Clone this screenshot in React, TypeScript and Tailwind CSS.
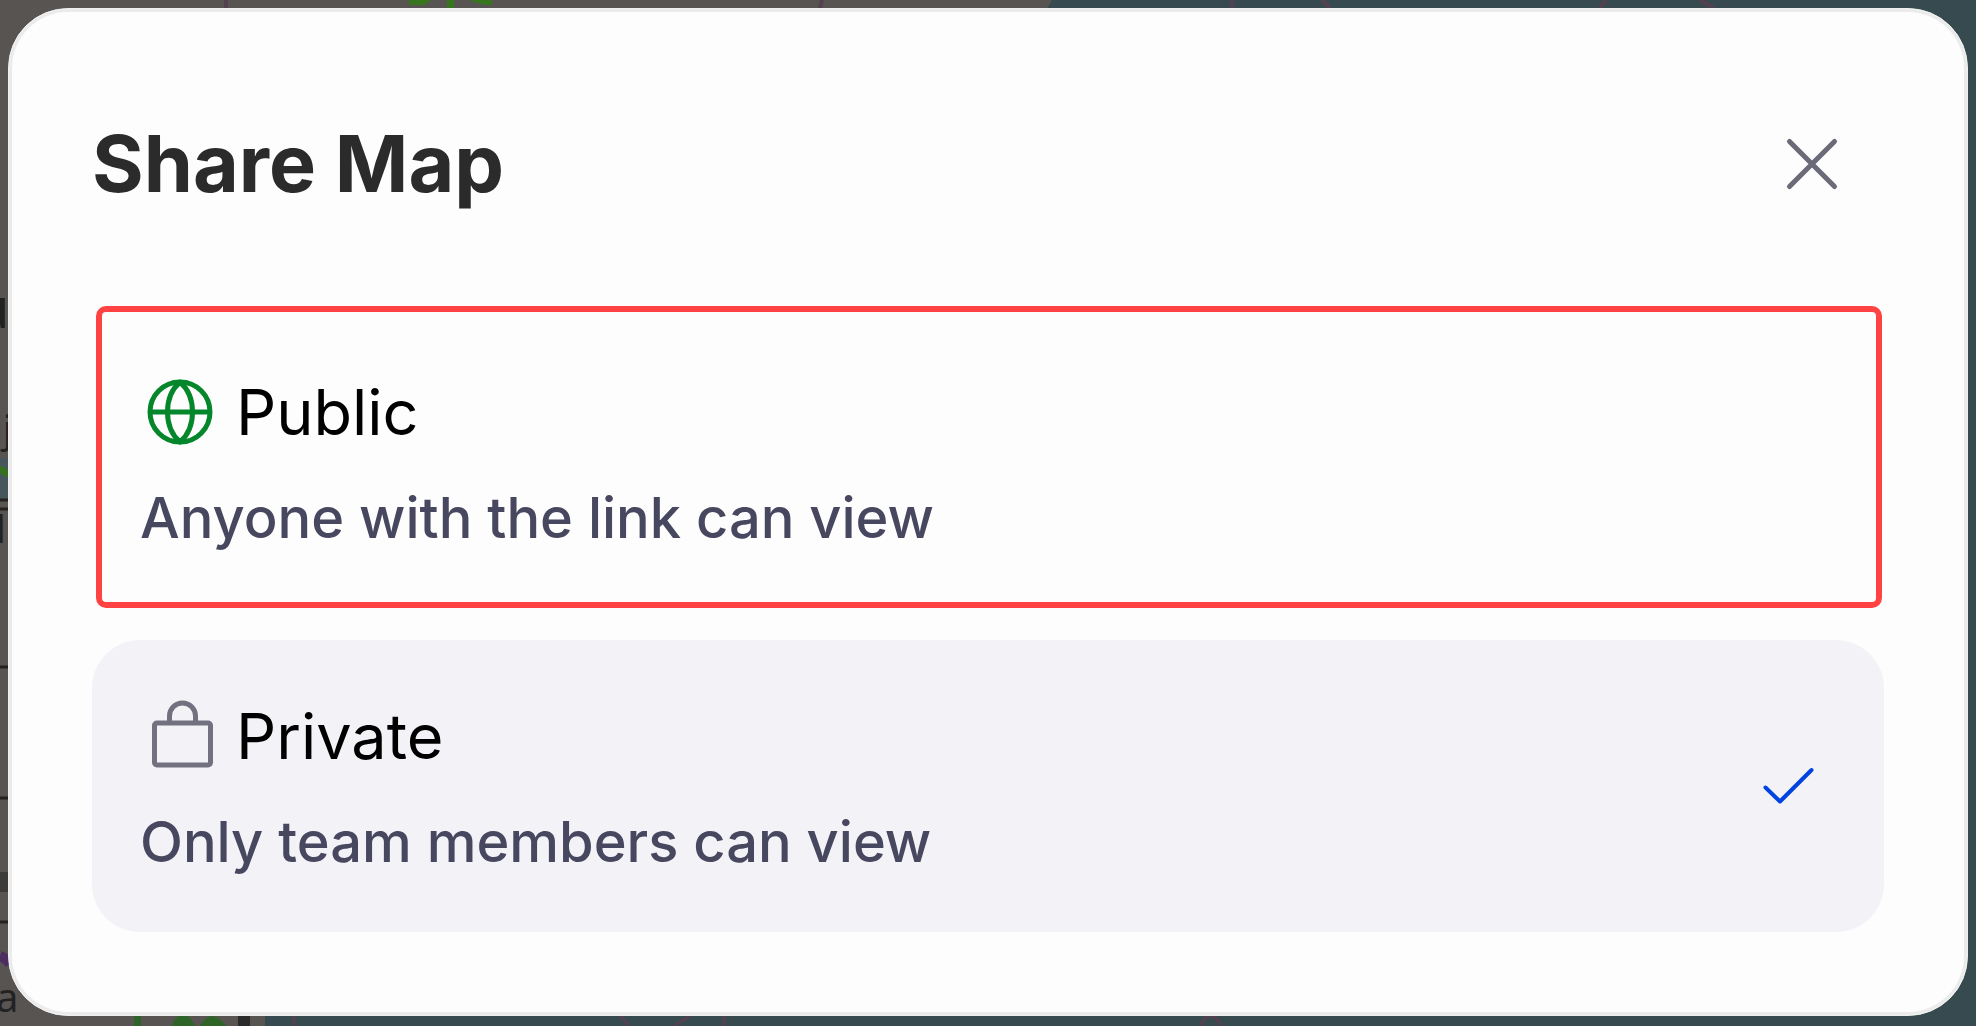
import React, { useState } from 'react';

type Access = 'public' | 'private';

function MapBackdrop() {
  return (
    <svg
      aria-hidden="true"
      className="absolute inset-0 h-full w-full"
      viewBox="0 0 1976 1026"
      preserveAspectRatio="none"
    >
      <rect width="1976" height="1026" fill="#575452" />
      <path d="M1052 0 H1976 V1026 H265 V1000 L1030 40 Z" fill="#364a50" />

      {/* parks */}
      <path d="M409 0h22l-6 5h-16z M447 0h7v8h-7z M468 0h24v5h-8z" fill="#37761f" />
      <path d="M134 1008h7v18h-7z M172 1026q4-14 16-11l8 11z M200 1026q12-20 26 0z" fill="#2f6428" />

      {/* water with a green bank */}
      <path d="M0 458h9v40H0z" fill="#46565c" />
      <path d="M0 466q5 0 9 6v6q-5-1-9-5z" fill="#37701f" />

      {/* roads and rails */}
      <path d="M0 500h9 M0 509h9 M0 667h9 M0 798h9 M0 922h9" stroke="#222222" strokeWidth="3" />
      <path d="M0 872h9v20H0z" fill="#3d3b3a" />
      <path d="M226 0v8 M822 0l-2 8 M1232 0v8 M1322 0l8 8 M1606 0l-6 8 M1700 0l14 8" stroke="#54404e" strokeWidth="4" />
      <path d="M294 1016v10 M620 1016l10 10 M690 1016l-16 10 M724 1016v10 M1200 1026q10-20 22 0" stroke="#54404e" strokeWidth="3" fill="none" />
      <path d="M238 1008h12v18h-12z" fill="#2b2b2b" />
      <path d="M0 956q6 2 10 8" stroke="#4b2d62" strokeWidth="10" fill="none" />

      <g fill="#222222" fontFamily="Noto Sans, sans-serif">
        <text x="-25" y="328" fontSize="56">u</text>
        <text x="-7" y="443" fontSize="38">ij</text>
        <text x="-4" y="543" fontSize="38">l</text>
        <text x="-4" y="1012" fontSize="40">a</text>
      </g>
    </svg>
  );
}

function GlobeIcon() {
  return (
    <svg className="size-[76px] shrink-0 text-[#04872b]" viewBox="0 0 76 76" fill="none" stroke="currentColor" strokeWidth="5">
      <circle cx="40" cy="38" r="30" />
      <path d="M10 38h60" />
      <path d="M40 8C32 15 27.5 26 27.5 38S32 61 40 68C48 61 52.5 50 52.5 38S48 15 40 8Z" strokeLinejoin="round" />
    </svg>
  );
}

function LockIcon() {
  return (
    <svg className="size-[76px] shrink-0 text-[#72717f]" viewBox="0 0 76 76" fill="none" stroke="currentColor" strokeWidth="5">
      <rect x="14.5" y="25" width="56" height="42" rx="2.5" />
      <path d="M29.5 25V18a13 13 0 0 1 26 0v7" />
    </svg>
  );
}

function CheckIcon() {
  return (
    <svg className="mb-1.5 h-10 w-[52px] shrink-0 text-[#0043e0]" viewBox="0 0 52 40" fill="none" stroke="currentColor" strokeWidth="4" strokeLinecap="round" strokeLinejoin="round">
      <path d="M3.5 21.5L18 35.5L49.5 4" />
    </svg>
  );
}

interface AccessOptionProps {
  icon: React.ReactNode;
  title: string;
  description: string;
  selected: boolean;
  highlighted?: boolean;
  onSelect: () => void;
}

function AccessOption({ icon, title, description, selected, highlighted, onSelect }: AccessOptionProps) {
  return (
    <button
      type="button"
      aria-pressed={selected}
      onClick={onSelect}
      className={`relative flex w-full items-center justify-between rounded-[48px] pt-14 pr-[70px] pb-[50px] pl-12 text-left ${
        selected ? 'bg-[#f3f2f7]' : ''
      }`}
    >
      <span className="block">
        <span className="flex h-20 items-center gap-5 text-[63px] text-black">
          {icon}
          {title}
        </span>
        <span className="mt-[26px] block text-[56px] leading-20 font-medium text-[#47475f]">{description}</span>
      </span>
      {selected && <CheckIcon />}
      {highlighted && (
        <span className="pointer-events-none absolute -top-2.5 right-0.5 bottom-0 left-1 rounded-[10px] border-6 border-[#ff4343]" />
      )}
    </button>
  );
}

export default function App() {
  const [access, setAccess] = useState<Access>('private');

  return (
    <div className="relative flex min-h-screen overflow-hidden bg-[#575452] p-2 font-[Inter,sans-serif]">
      <MapBackdrop />

      <div
        role="dialog"
        aria-labelledby="share-title"
        className="relative mb-0.5 flex-1 rounded-[60px] border border-[#f0f0f0] bg-[#fdfdfd] px-[83px] pt-[106px] inset-ring-3 inset-ring-[#ebebeb]"
      >
        <div className="flex items-center justify-between pr-10">
          <h2 id="share-title" className="text-[79px] leading-24 font-bold text-[#2b2b2b]">
            Share Map
          </h2>
          <button type="button" aria-label="Close" className="p-1 text-[#6a6a78]">
            <svg className="size-14" viewBox="0 0 56 56" fill="none" stroke="currentColor" strokeWidth="5" strokeLinecap="round">
              <path d="M5.5 6.5L50.5 51.5M50.5 6.5L5.5 51.5" />
            </svg>
          </button>
        </div>

        <div className="mt-[105px] flex flex-col gap-8">
          <AccessOption
            icon={<GlobeIcon />}
            title="Public"
            description="Anyone with the link can view"
            selected={access === 'public'}
            highlighted
            onSelect={() => setAccess('public')}
          />
          <AccessOption
            icon={<LockIcon />}
            title="Private"
            description="Only team members can view"
            selected={access === 'private'}
            onSelect={() => setAccess('private')}
          />
        </div>
      </div>
    </div>
  );
}
